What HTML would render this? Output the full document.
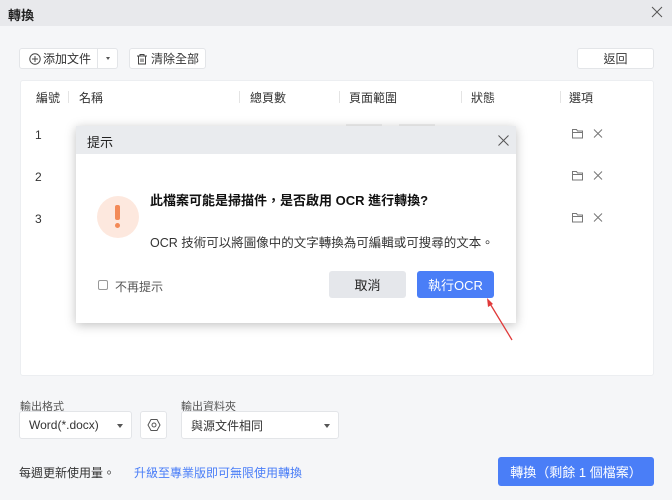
<!DOCTYPE html><html><head><meta charset="utf-8"><style>
*{margin:0;padding:0;box-sizing:border-box}
body{width:672px;height:500px;overflow:hidden;background:#f5f6f8;font-family:"Liberation Sans","Noto Sans CJK TC",sans-serif;font-size:12px;color:#333;position:relative}
.a{position:absolute}
.btn{position:absolute;background:#fff;border:1px solid #e3e5e8;border-radius:3px;display:flex;align-items:center;justify-content:center;font-size:12px;color:#333}
.th{position:absolute;top:89px;font-size:12px;color:#333}
.sep{position:absolute;top:91px;width:1px;height:12px;background:#e4e4e4}
.sel{position:absolute;background:#fff;border:1px solid #e3e5e8;border-radius:3px;font-size:12px;color:#333;display:flex;align-items:center;padding-left:9px}
.tri{position:absolute;right:8px;top:12px;width:0;height:0;border-left:3px solid transparent;border-right:3px solid transparent;border-top:4px solid #555}
</style></head><body>
<div class="a" style="left:0;top:0;width:672px;height:26px;background:#e8e9ec"></div>
<div class="a" style="left:8px;top:5px;font-size:13px;font-weight:bold;color:#222">轉換</div>
<svg class="a" style="left:651px;top:6px" width="12" height="12"><path d="M1 1l10 10M11 1L1 11" stroke="#555" stroke-width="1"/></svg>

<div class="btn" style="left:19px;top:48px;width:99px;height:21px;justify-content:flex-start;padding-left:9px">
<svg width="12" height="12" viewBox="0 0 12 12"><circle cx="6" cy="6" r="5.2" fill="none" stroke="#444"/><path d="M6 3v6M3 6h6" stroke="#444"/></svg><span style="margin-left:2px">添加文件</span>
<span style="position:absolute;left:77px;top:0;width:1px;height:19px;background:#e3e5e8"></span><span style="position:absolute;left:86px;top:8px;border-left:2.5px solid transparent;border-right:2.5px solid transparent;border-top:3px solid #555"></span></div>
<div class="btn" style="left:129px;top:48px;width:77px;height:21px">
<svg width="12" height="12" viewBox="0 0 12 12"><path d="M1 3h10M4 3V1.5h4V3M2.5 3v8h7V3M5 5.5v3.5M7 5.5v3.5" fill="none" stroke="#444"/></svg><span style="margin-left:3px">清除全部</span></div>
<div class="btn" style="left:577px;top:48px;width:77px;height:21px">返回</div>

<div class="a" style="left:20px;top:80px;width:634px;height:296px;background:#fff;border:1px solid #eceef1;border-radius:3px"></div>
<div class="th" style="left:36px">編號</div><div class="sep" style="left:68px"></div>
<div class="th" style="left:79px">名稱</div><div class="sep" style="left:239px"></div>
<div class="th" style="left:250px">總頁數</div><div class="sep" style="left:339px"></div>
<div class="th" style="left:349px">頁面範圍</div><div class="sep" style="left:461px"></div>
<div class="th" style="left:471px">狀態</div><div class="sep" style="left:560px"></div>
<div class="th" style="left:569px">選項</div>
<div class="a" style="left:35px;top:128px">1</div><div class="a" style="left:35px;top:170px">2</div><div class="a" style="left:35px;top:212px">3</div>
<div class="a" style="left:346px;top:124px;width:36px;height:10px;background:#f0f0f0"></div>
<div class="a" style="left:399px;top:124px;width:36px;height:10px;background:#f0f0f0"></div>
<svg class="a" style="left:571px;top:128px" width="36" height="100" viewBox="0 0 36 100">
<g fill="none" stroke="#777" stroke-width="1"><path d="M1.5 1.5h4l1 1.5h5v7h-10zM1.5 4.5h10"/><path d="M23 1.5l8 8M31 1.5l-8 8"/>
<path d="M1.5 43.5h4l1 1.5h5v7h-10zM1.5 46.5h10"/><path d="M23 43.5l8 8M31 43.5l-8 8"/>
<path d="M1.5 85.5h4l1 1.5h5v7h-10zM1.5 88.5h10"/><path d="M23 85.5l8 8M31 85.5l-8 8"/></g></svg>

<div class="a" style="left:76px;top:126px;width:440px;height:197px;background:#fff;box-shadow:0 2px 10px rgba(0,0,0,.25)"></div>
<div class="a" style="left:76px;top:126px;width:440px;height:28px;background:#e9ebee"></div>
<div class="a" style="left:87px;top:132px;font-size:13px;color:#222">提示</div>
<svg class="a" style="left:498px;top:135px" width="11" height="11"><path d="M0.5 0.5l10 10M10.5 0.5l-10 10" stroke="#555" stroke-width="1"/></svg>
<div class="a" style="left:97px;top:196px;width:42px;height:42px;border-radius:50%;background:#fde8de"></div>
<div class="a" style="left:115px;top:205px;width:5px;height:15px;background:#f38a57;border-radius:2px"></div>
<div class="a" style="left:115px;top:223px;width:5px;height:5px;background:#f38a57;border-radius:50%"></div>
<div class="a" style="left:150px;top:190px;font-size:13px;font-weight:bold;color:#111">此檔案可能是掃描件，是否啟用 OCR 進行轉換?</div>
<div class="a" style="left:150px;top:232px;font-size:12.5px;color:#333">OCR 技術可以將圖像中的文字轉換為可編輯或可搜尋的文本。</div>
<div class="a" style="left:98px;top:280px;width:10px;height:10px;border:1px solid #999;border-radius:2px"></div>
<div class="a" style="left:115px;top:278px;color:#555">不再提示</div>
<div class="a" style="left:329px;top:271px;width:77px;height:27px;background:#e5e7eb;border-radius:3px;display:flex;align-items:center;justify-content:center;font-size:13px;color:#222">取消</div>
<div class="a" style="left:417px;top:271px;width:77px;height:27px;background:#4a7ef7;border-radius:3px;display:flex;align-items:center;justify-content:center;font-size:13px;color:#fff">執行OCR</div>
<svg class="a" style="left:480px;top:295px" width="40" height="50"><path d="M32 45L9 7" stroke="#e03a3a" stroke-width="1.3"/><path d="M7 3l1 9l5-3z" fill="#e03a3a"/></svg>

<div class="a" style="left:20px;top:398px;font-size:11px;color:#555">輸出格式</div>
<div class="a" style="left:181px;top:398px;font-size:11px;color:#555">輸出資料夾</div>
<div class="sel" style="left:19px;top:411px;width:113px;height:28px">Word(*.docx)<span class="tri"></span></div>
<div class="btn" style="left:140px;top:411px;width:27px;height:28px"><svg width="14" height="14" viewBox="0 0 14 14"><path d="M4 1.5h6l3 5.5l-3 5.5h-6l-3-5.5z" fill="none" stroke="#555"/><circle cx="7" cy="7" r="2" fill="none" stroke="#555"/></svg></div>
<div class="sel" style="left:181px;top:411px;width:158px;height:28px">與源文件相同<span class="tri"></span></div>
<div class="a" style="left:19px;top:464px;color:#333">每週更新使用量。</div>
<div class="a" style="left:134px;top:464px;color:#4a7ef7">升級至專業版即可無限使用轉換</div>
<div class="a" style="left:498px;top:457px;width:156px;height:29px;background:#4a7ef7;border-radius:3px;display:flex;align-items:center;justify-content:center;font-size:13px;color:#fff">轉換（剩餘 1 個檔案）</div>
</body></html>
